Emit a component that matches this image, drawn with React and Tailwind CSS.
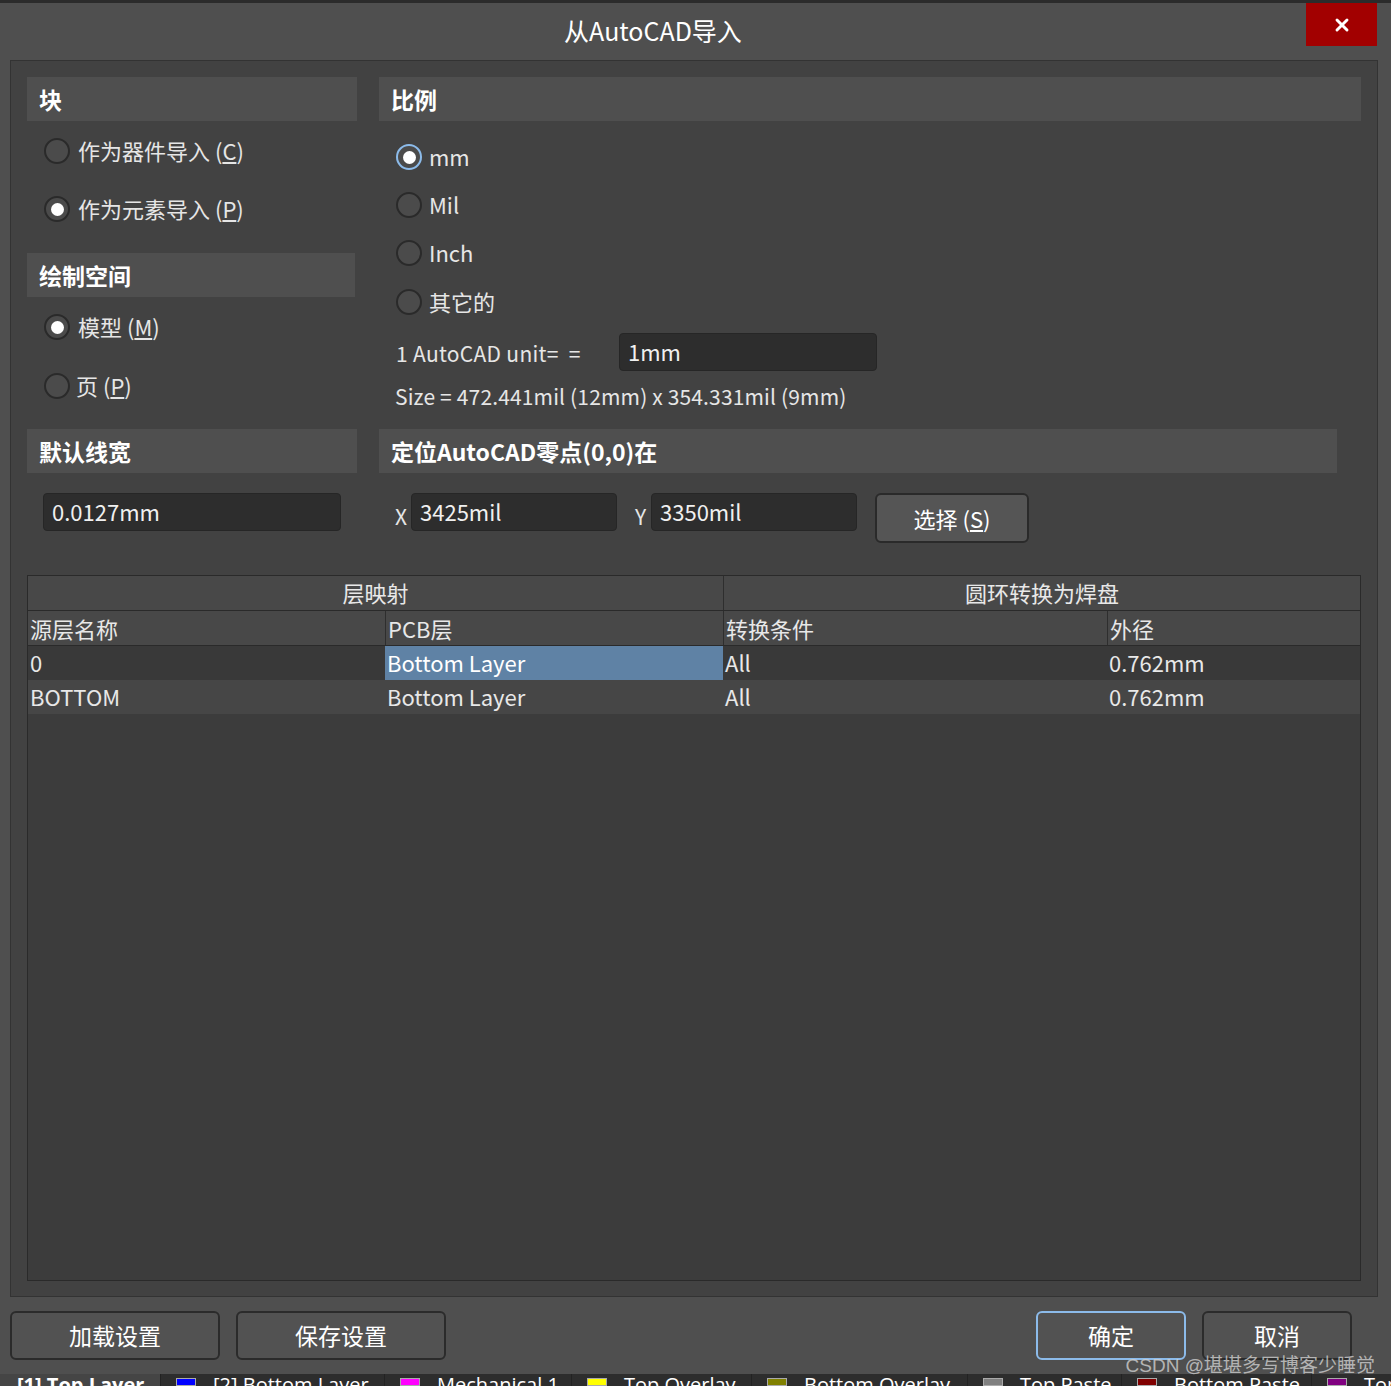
import React from "react";
import { X } from "lucide-react";
import clsx from "clsx";

const Radio = ({ checked, focus }) => (
  <span
    className={clsx(
      "w-[26px] h-[26px] shrink-0 rounded-full border-2 flex items-center justify-center bg-[#4b4b4b]",
      focus ? "border-[#8cbbea]" : "border-[#2a2a2a]"
    )}
  >
    {checked && <span className="w-[13px] h-[13px] rounded-full bg-white" />}
  </span>
);

const Option = ({ checked, focus, children, className, gap = "gap-[8px]" }) => (
  <div className={clsx("flex items-center h-[40px] text-[22px] text-[#e6e6e6]", gap, className)}>
    <Radio checked={checked} focus={focus} />
    <span className="leading-none -mt-[2px]">{children}</span>
  </div>
);

const Header = ({ children, className }) => (
  <div
    className={clsx(
      "h-[44px] bg-[#4f4f4f] flex items-center px-[12px] text-[23px] font-bold text-white",
      className
    )}
  >
    {children}
  </div>
);

const Field = ({ value, className }) => (
  <div
    className={clsx(
      "h-[38px] bg-[#2d2d2d] border border-[#262626] rounded-[4px] flex items-center px-[8px] text-[22px] text-[#f0f0f0]",
      className
    )}
  >
    <span className="-mt-[2px]">{value}</span>
  </div>
);

const Btn = ({ children, className }) => (
  <div
    className={clsx(
      "h-[49px] rounded-[6px] border-2 flex items-center justify-center text-[23px] text-white bg-[#525252]",
      className
    )}
  >
    {children}
  </div>
);

const layers = [
  { label: "[2] Bottom Layer", color: "bg-[#0000ff]", w: "w-[224px]" },
  { label: "Mechanical 1", color: "bg-[#ff00ff]", w: "w-[187px]" },
  { label: "Top Overlay", color: "bg-[#ffff00]", w: "w-[180px]" },
  { label: "Bottom Overlay", color: "bg-[#808000]", w: "w-[216px]" },
  { label: "Top Paste", color: "bg-[#808080]", w: "w-[154px]" },
  { label: "Bottom Paste", color: "bg-[#800000]", w: "w-[190px]" },
  { label: "Top Solder", color: "bg-[#800080]", w: "w-[120px]" },
];

const rows = [
  { src: "0", pcb: "Bottom Layer", cond: "All", dia: "0.762mm", bg: "bg-[#393939]", sel: true },
  { src: "BOTTOM", pcb: "Bottom Layer", cond: "All", dia: "0.762mm", bg: "bg-[#464646]" },
];

export default function App() {
  return (
    <div className="w-[1391px] h-[1386px] bg-[#4f4f4f] flex flex-col relative overflow-hidden font-['Noto_Sans_CJK_SC',sans-serif]">
      <div className="h-[3px] bg-[#2b2b2b]" />

      {/* title bar */}
      <div className="h-[57px] flex">
        <div className="flex-1 flex items-center justify-center pb-[2px] text-[25px] text-white">
          从AutoCAD导入
        </div>
        <div className="w-[71px] h-[43px] bg-[#a20000] flex items-center justify-center mr-[14px] text-white">
          <X size={20} strokeWidth={3.5} />
        </div>
      </div>

      {/* main panel */}
      <div className="ml-[10px] w-[1368px] h-[1237px] bg-[#424242] border border-[#333333] px-[16px] pt-[16px] pb-[15px] flex flex-col">
        <div className="h-[352px] flex gap-[22px]">
          <div className="w-[330px] flex flex-col">
            <Header>块</Header>
            <Option className="mt-[10px] ml-[17px]">
              作为器件导入 (<span className="underline underline-offset-2">C</span>)
            </Option>
            <Option checked className="mt-[18px] ml-[17px]">
              作为元素导入 (<span className="underline underline-offset-2">P</span>)
            </Option>
            <Header className="mt-[24px] w-[328px]">绘制空间</Header>
            <Option checked className="mt-[10px] ml-[17px]">
              模型 (<span className="underline underline-offset-2">M</span>)
            </Option>
            <Option className="mt-[19px] ml-[17px]" gap="gap-[6px]">
              页 (<span className="underline underline-offset-2">P</span>)
            </Option>
          </div>
          <div className="flex-1 flex flex-col">
            <Header>比例</Header>
            <Option checked focus className="mt-[16px] ml-[17px]" gap="gap-[7px]">
              mm
            </Option>
            <Option className="mt-[8px] ml-[17px]" gap="gap-[7px]">Mil</Option>
            <Option className="mt-[8px] ml-[17px]" gap="gap-[7px]">Inch</Option>
            <Option className="mt-[9px] ml-[17px]" gap="gap-[7px]">其它的</Option>
            <div className="mt-[11px] h-[38px] flex items-center ml-[17px] text-[21px] text-[#e6e6e6]">
              <span className="w-[223px] pt-[3px] tracking-[0.3px]">1 AutoCAD unit=&nbsp;&nbsp;=</span>
              <Field value="1mm" className="w-[258px]" />
            </div>
            <div className="mt-[14px] h-[24px] flex items-center ml-[16px] text-[21px] text-[#e6e6e6] tracking-[0.15px]">
              Size&nbsp;=&nbsp;472.441mil (12mm) x 354.331mil (9mm)
            </div>
          </div>
        </div>

        <div className="h-[146px] flex gap-[22px]">
          <div className="w-[330px] flex flex-col">
            <Header>默认线宽</Header>
            <Field value="0.0127mm" className="mt-[20px] ml-[16px] w-[298px]" />
          </div>
          <div className="flex-1 flex flex-col">
            <Header className="w-[958px]">定位AutoCAD零点(0,0)在</Header>
            <div className="mt-[20px] flex items-start text-[21px] text-[#e6e6e6]">
              <span className="w-[32px] pl-[16px] pt-[8px]">X</span>
              <Field value="3425mil" className="w-[206px]" />
              <span className="w-[34px] pl-[18px] pt-[8px]">Y</span>
              <Field value="3350mil" className="w-[206px]" />
              <Btn className="ml-[18px] w-[154px] h-[50px] !text-[22px] border-[#2a2a2a] bg-[#555555]">
                选择 (<span className="underline underline-offset-2">S</span>)
              </Btn>
            </div>
          </div>
        </div>

        {/* table */}
        <div className="flex-1 border border-[#2a2a2a] bg-[#3c3c3c] flex flex-col text-[22px] text-[#e8e8e8]">
          <div className="grid grid-cols-[695px_1fr] h-[35px] bg-[#484848] border-b border-[#2a2a2a]">
            <div className="flex items-center justify-center -mt-[2px]">层映射</div>
            <div className="flex items-center justify-center border-l border-[#2e2e2e]">
              <span className="-mt-[2px]">圆环转换为焊盘</span>
            </div>
          </div>
          <div className="grid grid-cols-[357px_338px_384px_1fr] h-[35px] bg-[#484848] border-b border-[#2a2a2a]">
            <div className="flex items-center pl-[2px]">源层名称</div>
            <div className="flex items-center pl-[2px] border-l border-[#2e2e2e]">PCB层</div>
            <div className="flex items-center pl-[2px] border-l border-[#2e2e2e]">转换条件</div>
            <div className="flex items-center pl-[2px] border-l border-[#2e2e2e]">外径</div>
          </div>
          {rows.map((r) => (
            <div key={r.src} className={clsx("grid grid-cols-[357px_338px_384px_1fr] h-[34px]", r.bg)}>
              <div className="flex items-center pl-[2px] pb-[3px]">{r.src}</div>
              <div className={clsx("flex items-center pl-[2px] pb-[3px]", r.sel && "bg-[#5f82a5] text-white")}>
                {r.pcb}
              </div>
              <div className="flex items-center pl-[2px] pb-[3px]">{r.cond}</div>
              <div className="flex items-center pl-[2px] pb-[3px]">{r.dia}</div>
            </div>
          ))}
        </div>
      </div>

      {/* footer buttons */}
      <div className="h-[77px] pt-[14px] flex px-[10px]">
        <Btn className="w-[210px] border-[#2b2b2b]">加载设置</Btn>
        <Btn className="ml-[16px] w-[210px] border-[#2b2b2b]">保存设置</Btn>
        <div className="flex-1" />
        <Btn className="w-[150px] border-[#8cbbea] bg-[#4f4f4f]">确定</Btn>
        <Btn className="ml-[16px] w-[150px] border-[#2b2b2b] mr-[29px]">取消</Btn>
      </div>

      {/* status bar behind the dialog */}
      <div className="h-[12px] bg-[#2d2d2d] flex overflow-hidden text-[20px] text-white font-['Open_Sans',sans-serif]">
        <div className="w-[161px] shrink-0 bg-[#454545] flex items-center pl-[17px] font-bold border-r border-[#222]">
          <span className="leading-[12px] mt-[9px] whitespace-nowrap">[1] Top Layer</span>
        </div>
        {layers.map((l) => (
          <div key={l.label} className={clsx("flex items-center pl-[15px] border-r border-[#222] shrink-0", l.w)}>
            <span className={clsx("w-[20px] h-[8px] shrink-0 border border-[#aaaaaa] mt-[4px]", l.color)} />
            <span className="ml-[17px] leading-[12px] mt-[9px] whitespace-nowrap">{l.label}</span>
          </div>
        ))}
      </div>

      <div className="absolute right-[16px] bottom-[9px] text-[19px] leading-[22px] text-[#d0d0d0]/80 font-['Liberation_Sans','Noto_Sans_CJK_SC',sans-serif]">
        CSDN @堪堪多写博客少睡觉
      </div>
    </div>
  );
}
